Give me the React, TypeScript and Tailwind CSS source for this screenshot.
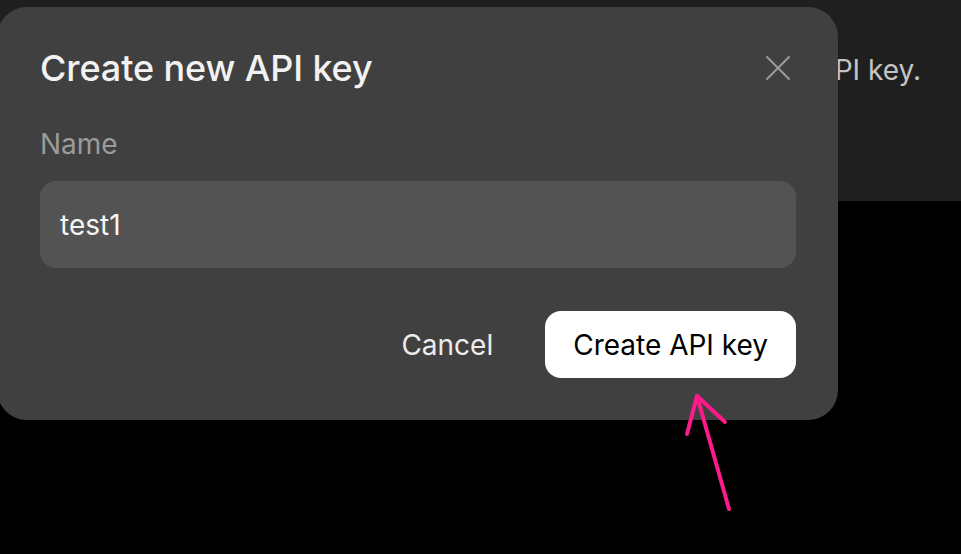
import { useState } from 'react'

const font = { fontFamily: 'Inter, "Noto Sans", sans-serif' }

function CloseIcon() {
  return (
    <svg width="28" height="28" viewBox="0 0 28 28" fill="none" stroke="#9a9a9a" strokeWidth="2" strokeLinecap="round">
      <path d="M3 3 L25 25" />
      <path d="M25 3 L3 25" />
    </svg>
  )
}

// hand-drawn annotation arrow pointing at the create button
function Arrow() {
  return (
    <svg className="absolute left-0 top-0 pointer-events-none" width="961" height="554" fill="none">
      <g stroke="#ff1a8c" strokeWidth="4" strokeLinecap="round" strokeLinejoin="round">
        <path d="M729 509 L697 396" />
        <path d="M697 396 L687 434" />
        <path d="M697 396 L725 422" />
      </g>
    </svg>
  )
}

export default function App() {
  const [name, setName] = useState('test1')

  return (
    <div className="relative w-[961px] h-[554px] overflow-hidden bg-black" style={font}>
      {/* page behind the dialog */}
      <div className="h-[201px] bg-[#1f1f1f] flex justify-end pr-[40px] pt-[52px]">
        <p className="text-[28px] leading-[36px] text-[#c4c4c4]">Create and manage your API key.</p>
      </div>

      <div className="absolute left-[-3px] top-[7px] w-[841px] h-[413px] rounded-[30px] bg-[#404040] pl-[43px] pr-[42px] pt-[39px]">
        <div className="flex items-center justify-between">
          <h2 className="text-[36px] leading-[44px] font-medium text-[#f2f2f2] tracking-[-0.1px]">Create new API key</h2>
          <button className="mr-[4px] text-[#9a9a9a]">
            <CloseIcon />
          </button>
        </div>

        <label className="block mt-[36px] text-[28px] leading-[36px] text-[#9b9b9b]">Name</label>

        <input
          value={name}
          onChange={(e) => setName(e.target.value)}
          className="mt-[19px] w-full h-[87px] rounded-[16px] bg-[#535353] px-[20px] text-[28px] text-[#f5f5f5] outline-none"
          style={font}
        />

        <div className="mt-[43px] flex items-center justify-end gap-[52px]">
          <button className="text-[28px] leading-[36px] text-[#ececec]">Cancel</button>
          <button className="h-[67px] px-[28px] rounded-[16px] bg-white text-[28px] leading-[36px] text-black">
            Create API key
          </button>
        </div>
      </div>

      <Arrow />
    </div>
  )
}
